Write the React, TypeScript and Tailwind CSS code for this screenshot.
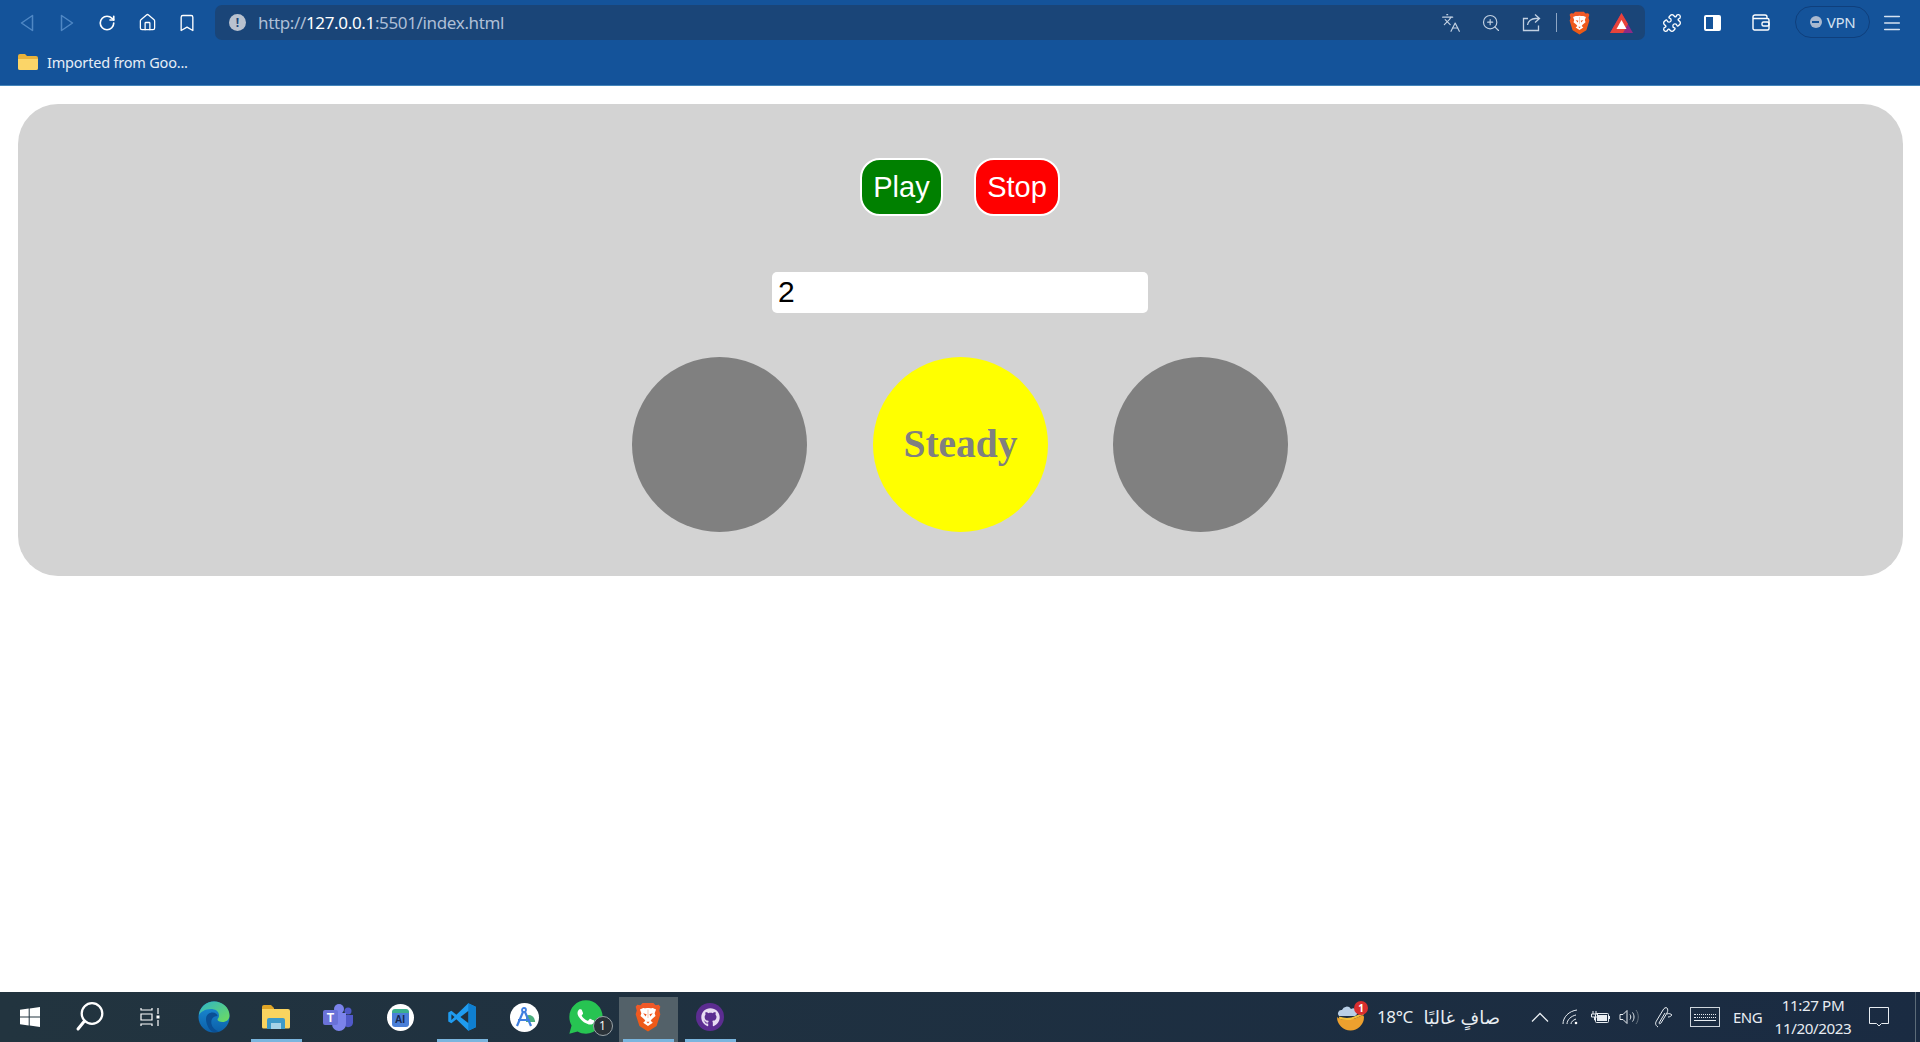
import React from "react";
import { RiWhatsappFill } from "react-icons/ri";
import { FaGithub } from "react-icons/fa";
import { RotateCw, Home, Bookmark, Languages, ZoomIn, Puzzle, Menu } from "lucide-react";

const BraveLogo = ({ w, h }: { w: number; h: number }) => (
  <svg width={w} height={h} viewBox="0 0 24 28">
    <defs>
      <linearGradient id={`brave${w}`} x1="0" y1="0" x2="0" y2="1">
        <stop offset="0" stopColor="#f1592a" />
        <stop offset="1" stopColor="#ec5a12" />
      </linearGradient>
    </defs>
    <path d="M7 1h10l2 2 3-.5 1.500 2L22.500 8l1 3.500-3.500 11L12 27.500 4 22.500.5 11.500l1-3.500L.5 4.500 2 2.500 5 3z" fill={`url(#brave${w})`} />
    <path d="M12 5.500c2 0 3 .5 4.500.2l3 1.300-1.300 3.500.8 2.500-3.500 3-1 1.500 2 1.800-4.500 3-4.500-3 2-1.800-1-1.500-3.500-3 .8-2.500L4.500 7l3-1.300c1.500.3 2.500-.2 4.500-.2z" fill="#fff" />
    <path d="M7.500 10.500l3.200 1-.9 2zM16.500 10.500l-3.200 1 .9 2zM10.500 18.500h3L12 20z" fill="#ef5a24" />
    <path d="M12 7v8" stroke="#f6b69b" strokeWidth=".8" />
  </svg>
);

const EdgeLogo = () => (
  <svg width="32" height="32" viewBox="0 0 32 32">
    <defs>
      <linearGradient id="edgeA" x1="0" y1="0" x2="1" y2="1">
        <stop offset="0" stopColor="#2fb5c8" />
        <stop offset="1" stopColor="#6fdc5c" />
      </linearGradient>
      <linearGradient id="edgeB" x1="0" y1="0" x2="0" y2="1">
        <stop offset="0" stopColor="#1b8fd8" />
        <stop offset="1" stopColor="#0c5fa8" />
      </linearGradient>
    </defs>
    <circle cx="16" cy="16" r="15.500" fill="url(#edgeB)" />
    <path d="M1 14C2 6 8 .5 16 .5c9 0 15.500 6.500 15.500 14 0 4-3 6.500-7 6.500-3 0-5-1-5-2.500 0-1 1.500-1.500 1.500-4C21 10 17 8 13 8 7 8 2.500 11 1 14z" fill="url(#edgeA)" />
    <path d="M8 18c0-4 3-6.500 6.500-6.500 3 0 5 2 5 3.500-4 0-7 3-6 8 .5 3 3 6 7 7.500-1 .3-2.500.5-4 .5-5 0-8.500-8-8.500-13z" fill="#0a4f94" />
  </svg>
);

const FolderLogo = () => (
  <svg width="28" height="24" viewBox="0 0 28 24">
    <path d="M0 2a2 2 0 0 1 2-2h7l3 3v3H0z" fill="#e0a526" />
    <path d="M0 4h26a2 2 0 0 1 2 2v16a1.500 1.500 0 0 1-1.500 1.500h-25A1.500 1.500 0 0 1 0 22z" fill="#fad45f" />
    <path d="M5 24v-9a2 2 0 0 1 2-2h14a2 2 0 0 1 2 2v9h-4v-6H9v6z" fill="#3d9ac9" />
    <rect x="9" y="18" width="10" height="6" fill="#a5d3e8" />
  </svg>
);

const TeamsLogo = () => (
  <svg width="30" height="28" viewBox="0 0 30 28">
    <circle cx="16" cy="6" r="5" fill="#7b83eb" />
    <circle cx="25" cy="8" r="3.500" fill="#5059c9" />
    <path d="M21 12h9v8a5 5 0 0 1-9 2z" fill="#5059c9" />
    <path d="M7 10h16v11a7 7 0 0 1-14 0z" fill="#7b83eb" />
    <rect x="0" y="7" width="15" height="15" rx="2" fill="#6a72d8" />
    <text x="7.500" y="19" textAnchor="middle" fontSize="12" fontWeight="700" fill="#fff" fontFamily="Liberation Sans, sans-serif">T</text>
  </svg>
);

const StudioLogo = () => (
  <div className="w-[27px] h-[27px] rounded-full bg-white flex items-center justify-center">
    <div className="w-[17px] h-[18px] mt-[1px] rounded-[3px] border-t-[4px] border-[#3bb08f] bg-[#4a7fd8] flex items-center justify-center text-[10px] leading-none font-bold text-[#16264d] font-['Liberation_Sans',sans-serif]">
      AI
    </div>
  </div>
);

const VsCodeLogo = () => (
  <svg width="30" height="30" viewBox="0 0 24 24">
    <path d="M17 1l6 2.800v16.400L17 23 7.500 13.800l-4 3.200L1 15.600V8.400L3.500 7l4 3.200z" fill="#1f9cf0" />
    <path d="M17 1l6 2.800v16.400L17 23z" fill="#0f7fd0" />
    <path d="M17 7.200v9.600L10.700 12z" fill="#22303b" />
    <path d="M3.500 9.700L6 12l-2.500 2.300z" fill="#22303b" />
  </svg>
);

const AStudioLogo = () => (
  <div className="w-[29px] h-[29px] rounded-full bg-white flex items-center justify-center">
    <svg width="25" height="25" viewBox="0 0 25 25" fill="none">
      <path d="M14 11a6 6 0 0 1 9 6h-9z" fill="#4caf7d" />
      <circle cx="12" cy="5" r="2" stroke="#3f7fe0" strokeWidth="1.800" />
      <path d="M11 7L5 21M13 7l6 14M6 15h12" stroke="#3f7fe0" strokeWidth="2.200" />
    </svg>
  </div>
);

const WhatsappLogo = () => (
  <div className="relative w-[31px] h-[31px] flex items-center justify-center">
    <div className="absolute w-[27px] h-[27px] rounded-full bg-white" />
    <RiWhatsappFill size={40} className="relative text-[#27c452] shrink-0" />
    <div className="absolute right-[-11px] bottom-[-3px] w-[20px] h-[20px] rounded-full bg-[#2a3238] border border-[#9aa3a8] flex items-center justify-center text-[12px] text-white font-['Open_Sans',sans-serif]">
      1
    </div>
  </div>
);

const GithubLogo = () => (
  <div className="w-[28px] h-[28px] rounded-full bg-[#5c2d91] flex items-center justify-center">
    <FaGithub size={19} className="text-[#e8dcf2]" />
  </div>
);

const WeatherIcon = () => (
  <div className="relative w-[30px] h-[30px]">
    <svg width="30" height="30" viewBox="0 0 30 30">
      <path d="M1 15a13.500 13.500 0 0 0 27 0C27 11 24 16 16 17 9 18 4 18 1 15z" fill="#eda02e" />
      <path d="M3 15.500c5 2 12 2 18-1 2-1 4-2 6.500-2.500" stroke="#f3c03c" strokeWidth="2" fill="none" />
      <path d="M3 14a3.500 3.500 0 0 1 3-6 5 5 0 0 1 9-1 4 4 0 0 1 4 7z" fill="#b9cfe6" />
    </svg>
    <div className="absolute right-[-2px] top-[-1px] w-[14px] h-[14px] rounded-full bg-[#d92e2e] flex items-center justify-center text-[10px] font-bold text-white">
      1
    </div>
  </div>
);

const TaskCell = ({
  children,
  bar,
  active,
}: {
  children: React.ReactNode;
  bar?: boolean;
  active?: boolean;
}) => (
  <div className="relative w-[62px] h-full flex items-center justify-center">
    {active && <div className="absolute left-[2px] right-[1px] top-[5px] bottom-0 bg-[#536169]" />}
    <div className="relative">{children}</div>
    {bar && <div className="absolute left-[6px] right-[5px] bottom-0 h-[3px] bg-[#7ab5de]" />}
  </div>
);

export default function App() {
  return (
    <div className="h-[1042px] flex flex-col bg-white overflow-hidden font-['Liberation_Sans',sans-serif]">
      {/* browser toolbar */}
      <div className="h-[86px] shrink-0 bg-[#14539a] border-b border-[#4585ba] font-['Noto_Sans',sans-serif]">
        <div className="h-[45px] pt-[5px] pl-[7px] flex items-start">
          <div className="w-10 h-[35px] flex items-center justify-center">
            <svg width="14" height="18" viewBox="0 0 14 18" fill="none" stroke="#4f87c4" strokeWidth="1.500">
              <path d="M12.500 1.500v15L1.500 9z" strokeLinejoin="round" />
            </svg>
          </div>
          <div className="w-10 h-[35px] flex items-center justify-center">
            <svg width="14" height="18" viewBox="0 0 14 18" fill="none" stroke="#4f87c4" strokeWidth="1.500">
              <path d="M1.500 1.500v15L12.500 9z" strokeLinejoin="round" />
            </svg>
          </div>
          <div className="w-10 h-[35px] flex items-center justify-center text-white">
            <RotateCw size={18} strokeWidth={2.2} />
          </div>
          <div className="w-10 h-[35px] flex items-center justify-center text-white">
            <Home size={19} strokeWidth={1.6} />
          </div>
          <div className="w-10 h-[35px] flex items-center justify-center text-white">
            <Bookmark size={20} strokeWidth={1.6} />
          </div>
          <div className="ml-2 w-[1430px] h-[35px] rounded-[7px] bg-[#1a4578] flex items-center">
            <div className="ml-[14px] w-[17px] h-[17px] rounded-full bg-[#b9c2cf] flex items-center justify-center text-[12px] font-bold leading-none text-[#1a4578]">
              !
            </div>
            <div className="ml-3 text-[17px] tracking-[-0.35px] text-[#aebfd6]">
              http://<span className="text-white">127.0.0.1</span>:5501/index.html
            </div>
            <div className="ml-auto flex items-center">
              <div className="w-10 flex justify-center text-[#c3d1e2]">
                <Languages size={20} strokeWidth={1.4} />
              </div>
              <div className="w-10 flex justify-center text-[#c3d1e2]">
                <ZoomIn size={20} strokeWidth={1.4} />
              </div>
              <div className="w-10 flex justify-center">
                <svg width="19" height="19" viewBox="0 0 19 19" fill="none" stroke="#c3d1e2" strokeWidth="1.300">
                  <path d="M6 5.500H1.500v12h15v-5" />
                  <path d="M5.500 12c.5-4 4-6.500 8-6.500h3.500M13 1.500l4.500 4-4.500 4" />
                </svg>
              </div>
              <div className="ml-[5px] w-px h-[19px] bg-[#8ea6c4]" />
              <div className="w-[44px] flex justify-center">
                <BraveLogo w={21} h={24} />
              </div>
              <div className="w-[44px] flex justify-center pr-[3px]">
                <svg width="23" height="20" viewBox="0 0 23 20">
                  <path d="M11.500 0L23 20H0z" fill="#8e2a86" />
                  <path d="M11.500 0L18 11 13 20H0z" fill="#e8433a" />
                  <path d="M11.500 7l5 9h-10z" fill="#fff" />
                </svg>
              </div>
            </div>
          </div>
          <div className="ml-[7px] w-10 h-[35px] flex items-center justify-center text-white">
            <Puzzle size={20} strokeWidth={1.6} />
          </div>
          <div className="w-10 h-[35px] flex items-center justify-center">
            <div className="w-[17px] h-[16px] rounded-[2px] border-2 border-white flex justify-end">
              <div className="w-[6px] bg-white" />
            </div>
          </div>
          <div className="ml-[9px] w-10 h-[35px] flex items-center justify-center">
            <svg width="18" height="17" viewBox="0 0 18 17" fill="none" stroke="#fff" strokeWidth="1.400">
              <path d="M1 4.500h14.500a1.500 1.500 0 0 1 1.500 1.500v8.500a1.500 1.500 0 0 1-1.500 1.500h-13A1.500 1.500 0 0 1 1 14.500V3a2 2 0 0 1 2-2h10a2 2 0 0 1 2 2v1.500" />
              <rect x="10" y="8" width="7" height="4" rx="1.500" />
            </svg>
          </div>
          <div className="ml-[14px] mt-[1px] w-[75px] h-[32px] rounded-full border border-[#0f3f7c] flex items-center justify-center gap-[5px] text-[15px] tracking-[-0.3px] text-[#d5e2f1]">
            <div className="w-[12px] h-[12px] rounded-full bg-[#aab9cf] flex items-center justify-center">
              <div className="w-[7px] h-[2px] bg-[#14539a]" />
            </div>
            VPN
          </div>
          <div className="w-[44px] h-[35px] flex items-center justify-center text-[#d5e2f1]">
            <Menu size={22} strokeWidth={1.6} />
          </div>
        </div>
        <div className="h-[40px] pl-[18px] flex items-start pt-[9px]">
          <svg width="20" height="16" viewBox="0 0 20 16">
            <path d="M0 2a2 2 0 0 1 2-2h5l2 2h9a2 2 0 0 1 2 2v10a2 2 0 0 1-2 2H2a2 2 0 0 1-2-2z" fill="#e9b23a" />
            <path d="M0 5h20v9a2 2 0 0 1-2 2H2a2 2 0 0 1-2-2z" fill="#fbd568" />
          </svg>
          <div className="ml-[9px] -mt-px text-[14.5px] leading-[18px] tracking-[-0.2px] text-[#e6edf6]">Imported from Goo...</div>
        </div>
      </div>

      {/* page */}
      <div className="flex-1 pl-[18px] pr-[17px] pt-[18px]">
        <div className="h-[472px] rounded-[40px] bg-[#d3d3d3] pt-[54px] pr-px flex flex-col items-center">
          <div className="flex gap-[31px]">
            <button className="w-[83px] h-[58px] pt-px rounded-[20px] border-2 border-white bg-[#008000] text-[29px] text-white">
              Play
            </button>
            <button className="w-[86px] h-[58px] pt-px rounded-[20px] border-2 border-white bg-[#ff0000] text-[29px] text-white">
              Stop
            </button>
          </div>
          <input
            type="text"
            defaultValue="2"
            className="mt-14 w-[376px] h-[41px] rounded-[5px] bg-white pl-[6px] pb-[2px] text-[30px] text-black outline-none"
          />
          <div className="mt-11 flex">
            <div className="w-[175px] h-[175px] rounded-full bg-[#808080]" />
            <div className="ml-[66px] w-[175px] h-[175px] rounded-full bg-[#ffff00] flex items-center justify-center text-[39.500px] font-bold text-[#808080] font-['Liberation_Serif',serif]">
              Steady
            </div>
            <div className="ml-[65px] w-[175px] h-[175px] rounded-full bg-[#808080]" />
          </div>
        </div>
      </div>

      {/* taskbar */}
      <div className="h-[50px] shrink-0 flex items-center bg-gradient-to-r from-[#22343f] to-[#1a2b42] text-white font-['Noto_Sans',sans-serif]">
        <div className="w-[60px] h-full flex items-center justify-center">
          <svg width="20" height="20" viewBox="0 0 20 20" fill="#fff">
            <path d="M0 2.800l8.700-1.200v7.900H0zM9.700 1.400L20 0v9.500H9.700zM0 10.500h8.700v7.900L0 17.200zM9.700 10.500H20V20l-10.300-1.400z" />
          </svg>
        </div>
        <div className="w-[60px] h-full flex items-center justify-center">
          <svg width="30" height="30" viewBox="0 0 30 30" fill="none" stroke="#fff">
            <circle cx="17" cy="11.500" r="10.300" strokeWidth="2.300" />
            <path d="M9.500 19L3 27" strokeWidth="3" strokeLinecap="round" />
          </svg>
        </div>
        <div className="w-[60px] h-full flex items-center justify-center">
          <svg width="20" height="20" viewBox="0 0 20 20" fill="none" stroke="#fff" strokeWidth="1.200">
            <path d="M1 1v2h11V1M1 7h11v6H1zM1 19v-2h11v2M18 1v6M18 13v6" />
            <rect x="16.500" y="8.500" width="3" height="3" fill="#fff" stroke="none" />
          </svg>
        </div>
        <div className="w-[3px]" />
        <TaskCell>
          <EdgeLogo />
        </TaskCell>
        <TaskCell bar>
          <FolderLogo />
        </TaskCell>
        <TaskCell>
          <TeamsLogo />
        </TaskCell>
        <TaskCell>
          <StudioLogo />
        </TaskCell>
        <TaskCell bar>
          <VsCodeLogo />
        </TaskCell>
        <TaskCell>
          <AStudioLogo />
        </TaskCell>
        <TaskCell>
          <WhatsappLogo />
        </TaskCell>
        <TaskCell bar active>
          <BraveLogo w={26} h={30} />
        </TaskCell>
        <TaskCell bar>
          <GithubLogo />
        </TaskCell>

        <div className="ml-auto flex items-center h-full text-[#e8edf2]">
          <WeatherIcon />
          <div className="ml-[11px] w-[36px] text-[17px] tracking-[-0.4px] whitespace-nowrap">18°C</div>
          <div dir="rtl" className="ml-[11px] w-[76px] text-[18px] whitespace-nowrap font-['DejaVu_Sans',sans-serif]">
            صافٍ غالبًا
          </div>
          <div className="ml-[30px] w-5 flex justify-center">
            <svg width="18" height="10" viewBox="0 0 18 10" fill="none" stroke="#e8edf2" strokeWidth="1.300">
              <path d="M1 9.500L9 1.500l8 8" />
            </svg>
          </div>
          <div className="ml-[11px] w-5 flex justify-center">
            <svg width="18" height="16" viewBox="0 0 18 16" fill="none" stroke="#e8edf2" strokeWidth="1">
              <path d="M1 15C1 8 7 2 15 1M5 15c0-4 4-8 9-9M9 15c0-2 2-4 5-5" />
              <circle cx="14" cy="14" r="1.300" fill="#fff" stroke="none" />
            </svg>
          </div>
          <div className="ml-[9px] w-5 flex justify-center">
            <svg width="20" height="13" viewBox="0 0 20 13" fill="none" stroke="#e8edf2" strokeWidth="1">
              <path d="M3 0v3M6 0v3M1.500 3h6v3h-6zM4.500 6v3h1" />
              <rect x="5.500" y="2.500" width="13" height="9" rx="1" />
              <rect x="7" y="4" width="10" height="6" fill="#e8edf2" stroke="none" />
              <rect x="18.500" y="5" width="1.500" height="3" fill="#e8edf2" stroke="none" />
            </svg>
          </div>
          <div className="ml-[9px] w-5 flex justify-center">
            <svg width="20" height="16" viewBox="0 0 20 16" fill="none" stroke="#e8edf2" strokeWidth="1">
              <path d="M1 5.500h3L8 1.500v13l-4-4H1z" />
              <path d="M11 5.500c1 1.500 1 3.500 0 5M13.500 3.500c2 2.500 2 6.500 0 9" />
              <path d="M17 1c3 4 3 10 0 14" stroke="#66727e" />
            </svg>
          </div>
          <div className="ml-[15px] w-5 flex justify-center">
            <svg width="20" height="22" viewBox="0 0 20 22" fill="none" stroke="#e8edf2" strokeWidth="1">
              <path d="M4 21c-3-2-3-4-1-7l6-10c1-2 3-3 4-2s1 3 0 5l-6 10c-1 1-2 1-2 0l6-10" />
              <path d="M13 8c2-1 4 0 5 1-1 1-2 2-4 2" />
            </svg>
          </div>
          <div className="ml-[16px] w-[30px] h-[20px] border border-[#cfd6dd] flex flex-col justify-center gap-[2px] px-[3px]">
            <div className="h-px border-t border-dotted border-[#e8edf2]" />
            <div className="h-px border-t border-dotted border-[#e8edf2]" />
            <div className="h-px bg-[#e8edf2]" />
          </div>
          <div className="ml-[13px] w-[30px] text-[15px] tracking-[-0.5px]">ENG</div>
          <div className="ml-[12px] w-[76px] flex flex-col items-center text-[15.200px] leading-[23px] tracking-[-0.4px] whitespace-nowrap">
            <div>11:27 PM</div>
            <div>11/20/2023</div>
          </div>
          <div className="ml-[18px] w-5 flex justify-center">
            <svg width="20" height="21" viewBox="0 0 20 21" fill="none" stroke="#e8edf2" strokeWidth="1">
              <path d="M.5.500h19v16h-7l-2.500 2.500-2.500-2.500h-7z" />
            </svg>
          </div>
          <div className="ml-[26px] w-px h-full bg-[#5c6b78]" />
          <div className="w-[4px]" />
        </div>
      </div>
    </div>
  );
}
